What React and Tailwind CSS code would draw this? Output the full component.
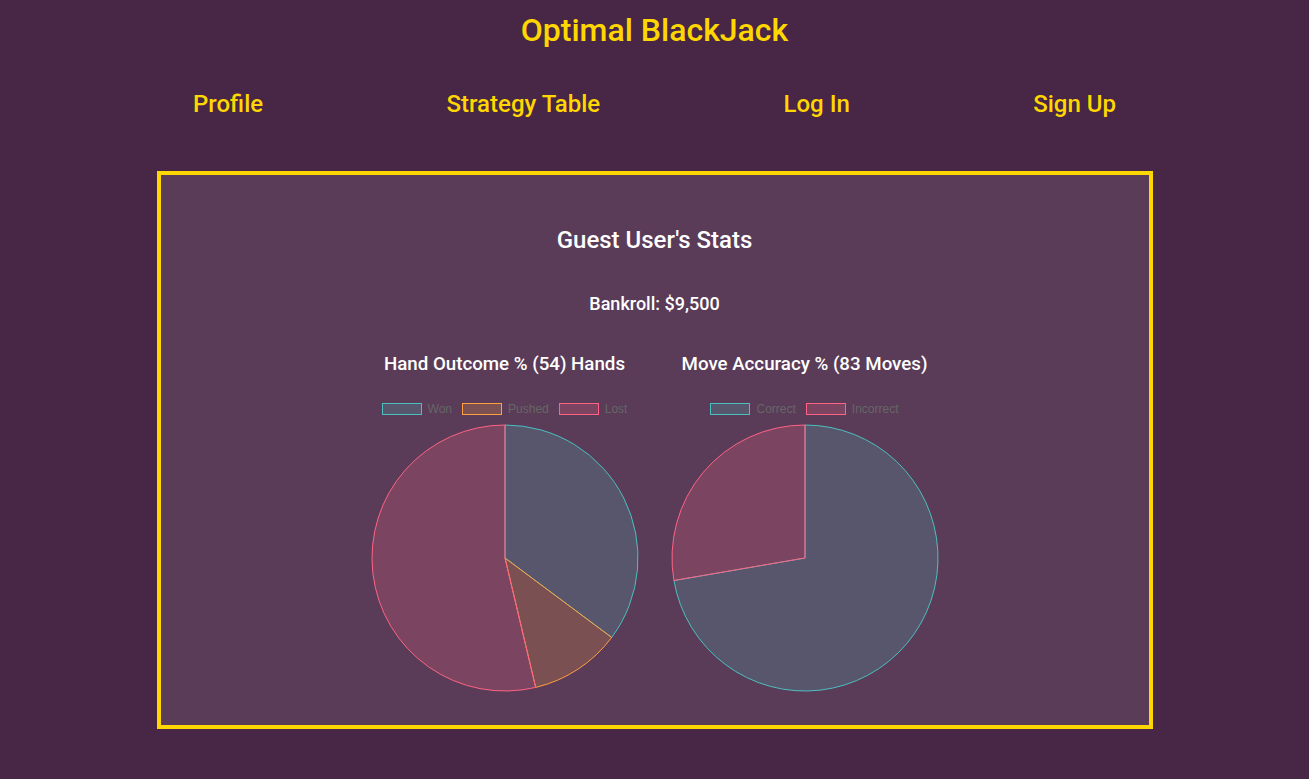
import React from 'react'

const COLORS = {
  teal: '75,192,192',
  orange: '255,159,64',
  red: '255,99,132'
}

const handData = [
  { label: 'Won', value: 19, color: COLORS.teal },
  { label: 'Pushed', value: 6, color: COLORS.orange },
  { label: 'Lost', value: 29, color: COLORS.red }
]

const moveData = [
  { label: 'Correct', value: 60, color: COLORS.teal },
  { label: 'Incorrect', value: 23, color: COLORS.red }
]

const Pie = ({ data }) => {
  const r = 133
  const c = 134
  const total = data.reduce((s, d) => s + d.value, 0)
  let start = 0
  const point = (a) => [c + r * Math.sin(a), c - r * Math.cos(a)]

  return (
    <svg width="268" height="268" viewBox="0 0 268 268">
      {data.map((d) => {
        const a0 = start
        const a1 = start + (d.value / total) * Math.PI * 2
        start = a1
        const [x0, y0] = point(a0)
        const [x1, y1] = point(a1)
        const large = a1 - a0 > Math.PI ? 1 : 0
        return (
          <path
            key={d.label}
            d={`M${c} ${c} L${x0} ${y0} A${r} ${r} 0 ${large} 1 ${x1} ${y1} Z`}
            fill={`rgba(${d.color},0.2)`}
            stroke={`rgb(${d.color})`}
            strokeWidth="1"
          />
        )
      })}
    </svg>
  )
}

const Chart = ({ title, data }) => (
  <div className="w-[300px] flex flex-col items-center">
    <h3 className="text-[18.72px] font-medium text-white leading-[22px]">{title}</h3>
    <div className="mt-[25px] flex items-center justify-center gap-[10px] font-['Liberation_Sans',sans-serif] text-[12px] text-[#666]">
      {data.map((d) => (
        <div key={d.label} className="flex items-center gap-[6px]">
          <span
            className="inline-block w-[40px] h-[12px] border"
            style={{ backgroundColor: `rgba(${d.color},0.2)`, borderColor: `rgb(${d.color})` }}
          />
          <span>{d.label}</span>
        </div>
      ))}
    </div>
    <div className="mt-[6px]">
      <Pie data={data} />
    </div>
  </div>
)

const App = () => {
  return (
    <div className="min-h-screen bg-[#482646] font-['Roboto',sans-serif] pb-[50px]">
      <h1 className="pt-[10px] text-center text-[32px] font-medium leading-[40px] text-[#ffd700]">
        Optimal BlackJack
      </h1>

      <nav className="mt-[39px] w-[923px] mx-auto flex justify-between text-[24px] font-medium leading-[30px] text-[#ffd700]">
        <a>Profile</a>
        <a>Strategy Table</a>
        <a>Log In</a>
        <a>Sign Up</a>
      </nav>

      <div className="mt-[52px] mx-auto w-[996px] h-[558px] border-4 border-[#ffd700] bg-[#5a3c58] flex flex-col items-center">
        <h2 className="mt-[50px] text-[24px] font-medium leading-[30px] text-white">Guest User's Stats</h2>
        <p className="mt-[38px] text-[18px] font-medium leading-[22px] text-white">Bankroll: $9,500</p>
        <div className="mt-[38px] flex">
          <Chart title="Hand Outcome % (54) Hands" data={handData} />
          <Chart title="Move Accuracy % (83 Moves)" data={moveData} />
        </div>
      </div>
    </div>
  )
}

export default App
